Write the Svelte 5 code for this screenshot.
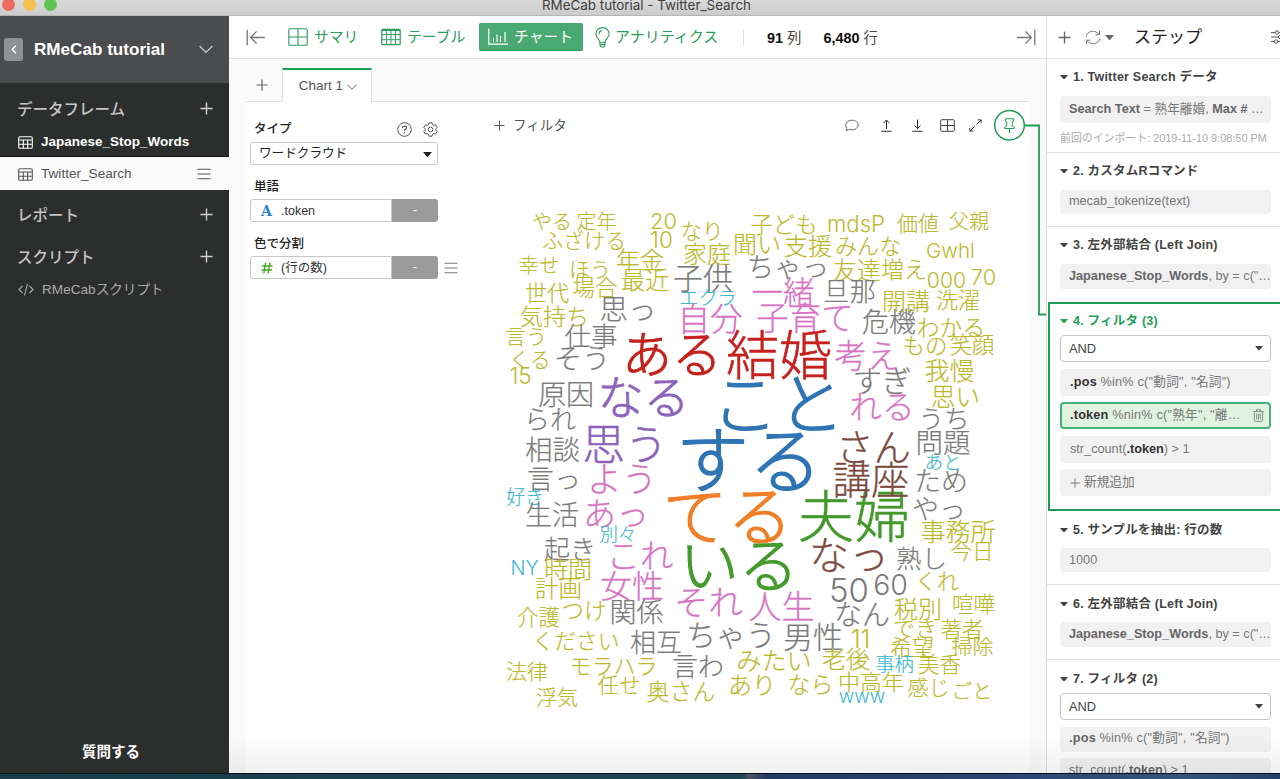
<script>
  const C = {
    o: '#bcb92c', g: '#7b7b7b', p: '#d873c3', c: '#39b7cb', r: '#c6211c',
    u: '#8c63bb', b: '#2f74b3', n: '#7d4b40', e: '#439a2b', a: '#f07f27'
  };
  // word, centre x, centre y, size, colour
  const words = [
    ['やる', 552, 221.5, 20, 'o'], ['定年', 596.5, 221.5, 20, 'o'], ['20', 663.5, 221, 21.8, 'o'], ['ふざける', 584, 240, 21, 'o'],
    ['10', 661.5, 240, 22.5, 'o'], ['なり', 702, 231, 21.5, 'o'], ['家庭', 707, 253.5, 24, 'o'], ['聞い', 757, 244, 24, 'o'],
    ['支援', 808, 245.5, 24, 'o'], ['子ども', 784, 225, 22.3, 'o'], ['mdsP', 856, 224, 22.2, 'o'], ['価値', 918, 223, 21, 'o'],
    ['父親', 969, 221, 20, 'o'], ['みんな', 868, 245.5, 22, 'o'], ['Gwhl', 950.5, 251, 20.5, 'o'], ['ちゃっ', 788, 267, 27.5, 'g'],
    ['友達', 857, 270, 23.5, 'o'], ['増え', 904, 269, 23, 'o'], ['000', 946.5, 280, 21.2, 'o'], ['70', 983.5, 277, 21.8, 'o'],
    ['一緒', 783, 292, 31.5, 'p'], ['旦那', 849.5, 291, 26.5, 'g'], ['開講', 906, 300.5, 24, 'o'], ['洗濯', 958, 300, 22, 'o'],
    ['子供', 703, 278, 30, 'g'], ['エクラ', 708, 298, 19.2, 'c'], ['自分', 710, 318.5, 32.5, 'p'], ['子育て', 805, 318, 32.5, 'p'],
    ['危機', 889, 322, 27, 'g'], ['わかる', 951, 327, 22.8, 'o'], ['もの', 925, 345.5, 22.5, 'o'], ['笑顔', 972, 345, 22.3, 'o'],
    ['我慢', 949.5, 370, 25, 'o'], ['思い', 955.5, 397, 24.5, 'o'], ['うち', 944, 418, 25.5, 'g'], ['年金', 640, 260, 24, 'o'],
    ['最近', 645, 279.5, 24, 'o'], ['幸せ', 539, 265, 20.5, 'o'], ['ほう', 590, 269, 21, 'o'], ['世代', 547, 293, 22, 'o'],
    ['場合', 595, 287.5, 22.5, 'o'], ['思っ', 628, 309, 28.5, 'g'], ['気持ち', 554.5, 316, 23, 'o'], ['言う', 526, 336, 21, 'o'],
    ['仕事', 591, 335.5, 26.5, 'g'], ['くる', 530, 359, 21, 'o'], ['そう', 582, 358, 28, 'g'], ['15', 520.5, 375.5, 22.5, 'o'],
    ['ある', 672, 354, 50, 'r'], ['結婚', 779, 355, 53, 'r'], ['考え', 867, 356, 32.5, 'p'], ['すぎ', 882, 381, 29.5, 'g'],
    ['れる', 882, 407, 32.7, 'p'], ['なる', 643.5, 396.5, 46, 'u'], ['こと', 778, 404, 66.5, 'b'], ['する', 749, 459, 73, 'b'],
    ['原因', 566, 394.5, 28, 'g'], ['られ', 550, 419, 26, 'g'], ['相談', 552.5, 450, 27.5, 'g'], ['思う', 625, 444, 42.5, 'u'],
    ['言っ', 554, 479, 27, 'g'], ['よう', 622, 479, 35, 'p'], ['好き', 525, 497, 18.8, 'c'], ['生活', 552, 515, 27, 'g'],
    ['あっ', 616, 513, 33, 'p'], ['別々', 618, 534, 18.5, 'c'], ['起き', 570, 549, 26, 'g'], ['これ', 640, 555, 33.5, 'p'],
    ['NY', 524.5, 567.5, 19.8, 'c'], ['時間', 568, 569, 24, 'o'], ['計画', 558.5, 588.5, 23.5, 'o'], ['女性', 632, 585.5, 32, 'p'],
    ['それ', 708.5, 602, 34.5, 'p'], ['介護', 538.5, 617, 21.5, 'o'], ['つけ', 584, 610, 22.5, 'o'], ['関係', 636.5, 612, 27, 'g'],
    ['ください', 576, 641, 21.8, 'o'], ['相互', 656, 642.5, 26, 'g'], ['ちゃう', 731, 635, 29.8, 'g'], ['男性', 813, 637, 30, 'g'],
    ['法律', 527, 671.5, 21, 'o'], ['モラハラ', 613.5, 666, 22, 'o'], ['言わ', 698, 666, 26, 'g'], ['任せ', 619, 685, 21.5, 'o'],
    ['奥さん', 681, 691.5, 23, 'o'], ['浮気', 557, 697, 21, 'o'], ['みたい', 774, 660, 25.2, 'o'], ['あり', 752, 685, 24, 'o'],
    ['なら', 810.5, 684.5, 23, 'o'], ['中高年', 871, 682, 22, 'o'], ['www', 862, 696.5, 19, 'c'], ['感じ', 928.5, 687, 21, 'o'],
    ['ごと', 972, 691.5, 20.5, 'o'], ['老後', 846, 659, 24, 'o'], ['事柄', 894.5, 663.5, 19.3, 'c'], ['美香', 939.5, 664, 21.5, 'o'],
    ['11', 860.5, 639, 25, 'o'], ['希望', 912, 647, 22, 'o'], ['掃除', 972.5, 646, 21, 'o'], ['でき', 915, 628, 22, 'o'],
    ['著者', 962, 629, 21.5, 'o'], ['税別', 918, 609, 24, 'o'], ['喧嘩', 973.5, 604, 21.5, 'o'], ['なん', 862, 614.5, 28, 'g'],
    ['50', 849, 590, 33, 'g'], ['60', 890.5, 584.5, 28.5, 'g'], ['くれ', 937, 581, 22, 'o'], ['熟し', 921.5, 558, 25.5, 'g'],
    ['今日', 972, 551, 21.5, 'o'], ['事務所', 958, 531.5, 25, 'o'], ['なっ', 849, 555, 40, 'n'], ['夫婦', 854, 516, 56, 'e'],
    ['てる', 727.5, 515, 65, 'a'], ['いる', 739, 564.5, 59.5, 'e'], ['人生', 781.5, 606.5, 33, 'p'], ['講座', 871, 479, 38.5, 'n'],
    ['さん', 873.5, 447, 37.5, 'n'], ['問題', 943, 443, 27.5, 'g'], ['あと', 943, 462, 18.5, 'c'], ['ため', 941, 481, 27, 'g'],
    ['やっ', 939, 509, 27, 'g']
  ];
  const latin = (w) => /^[\x00-\x7f]+$/.test(w);
  const stroke = (w, s) => (s > 40 ? (/[\u4e00-\u9fff]/.test(w) ? 0.5 : s * 0.018) : latin(w) ? 0 : s * 0.008);
</script>

{#snippet plus(s, w = 1.5)}
  <svg width={s} height={s} viewBox="0 0 14 14" fill="none" stroke="currentColor" stroke-width={w}><path d="M7 .5v13M.5 7h13" /></svg>
{/snippet}
{#snippet grid(w, h, sw)}
  <svg width={w} height={h} viewBox="0 0 20 17" fill="none" stroke="currentColor" stroke-width={sw}>
    <rect x=".8" y=".8" width="18.4" height="15.4" rx="1" /><path d="M1 6h18M1 11.2h18M5.6 2v14M10 2v14M14.5 2v14" stroke-width={sw * 0.8} /><path d="M1 1.6h18" stroke-width={sw * 1.5} />
  </svg>
{/snippet}
{#snippet table()}
  <svg width="15" height="13" viewBox="0 0 15 13" fill="none" stroke="currentColor" stroke-width="1.1"><rect x=".7" y=".7" width="13.6" height="11.6" rx="1.4" /><path d="M1 4h13M1 8.2h13M5.3 4v8M9.7 4v8" /></svg>
{/snippet}
{#snippet chevron(w)}
  <svg width={w} height={w * 0.6} viewBox="0 0 14 8" fill="none" stroke="currentColor" stroke-width="1.3"><path d="M.6.8 7 7.2 13.4.8" /></svg>
{/snippet}
{#snippet caret(w)}
  <svg width={w} height={w / 2 + 0.5} viewBox="0 0 8 4.5" fill="currentColor"><path d="M0 0h8L4.7 4q-.7.8-1.4 0z" /></svg>
{/snippet}
{#snippet burger()}
  <svg width="14" height="12" viewBox="0 0 14 12" stroke="currentColor" stroke-width="1.1"><path d="M.5 1.2h13M.5 6h13M.5 10.8h13" /></svg>
{/snippet}

<div class="app">
  <div class="titlebar">
    <div class="lights"><i class="red"></i><i class="yellow"></i><i class="green"></i></div>
    <span>RMeCab tutorial - Twitter_Search</span>
  </div>
  <div class="body">
    <aside class="side">
      <div class="project">
        <span class="back"><svg width="6" height="9" viewBox="0 0 6 9" fill="none" stroke="#fff" stroke-width="1.4"><path d="M5 .7 1.2 4.5 5 8.3" /></svg></span>
        <b>RMeCab tutorial</b>
        {@render chevron(14)}
      </div>
      <div class="grp g1"><span>データフレーム</span>{@render plus(13)}</div>
      <div class="item on">{@render table()}<b>Japanese_Stop_Words</b></div>
      <div class="item sel">{@render table()}<span>Twitter_Search</span><em>{@render burger()}</em></div>
      <div class="grp g2"><span>レポート</span>{@render plus(13)}</div>
      <div class="grp g3"><span>スクリプト</span>{@render plus(13)}</div>
      <div class="item script">
        <svg width="16" height="13" viewBox="0 0 16 13" fill="none" stroke="currentColor" stroke-width="1.1"><path d="M4.5 3 1 6.5 4.5 10M11.5 3 15 6.5 11.5 10M9.5.8l-3 11.6" /></svg>
        <span>RMeCabスクリプト</span>
      </div>
      <div class="ask">質問する</div>
    </aside>

    <main class="main">
      <nav class="tabs">
        <svg class="ic-l" width="20" height="17" viewBox="0 0 20 17" fill="none" stroke="#777" stroke-width="1.3"><path d="M1.2.8v15.4M4.5 8.5H19M10.6 2.4l-6 6.1 6 6.1" /></svg>
        <span class="tab t1"><svg width="20" height="18" viewBox="0 0 20 18" fill="none" stroke="currentColor" stroke-width="1.1"><rect x=".8" y=".8" width="18.4" height="16.4" rx="1" /><path d="M10 1v16M1 9h18" /></svg>サマリ</span>
        <span class="tab t2">{@render grid(20, 18, 1.2)}テーブル</span>
        <span class="tab t3"><svg width="20" height="17" viewBox="0 0 20 17" fill="none" stroke="currentColor" stroke-width="1.2"><path d="M.8.5v15.7H20M5.5 10v4M9 6.5V14M12.5 8v6M17 4v10" /></svg>チャート</span>
        <span class="tab t4"><svg width="15" height="21" viewBox="0 0 15 21" fill="none" stroke="currentColor" stroke-width="1.1"><path d="M4.7 15.2c0-3-3.8-4.3-3.8-8.2a6.6 6.4 0 0 1 13.2 0c0 3.9-3.8 5.2-3.8 8.2zM5 15.2v3.3l1.2 1.5h2.6l1.2-1.5v-3.3M5 17.6h5M4 7.2c0-2 1.3-3.3 3.3-3.4" /></svg>アナリティクス</span>
        <span class="rule"></span>
        <span class="count c1"><b>91</b> 列</span>
        <span class="count c2"><b>6,480</b> 行</span>
        <svg class="ic-r" width="20" height="17" viewBox="0 0 20 17" fill="none" stroke="#777" stroke-width="1.3"><path d="M18.8.8v15.4M1 8.5h14.5M9.4 2.4l6 6.1-6 6.1" /></svg>
      </nav>
      <div class="charts">
        <div class="add">{@render plus(12, 1.4)}</div>
        <div class="charttab">Chart 1 {@render chevron(10)}</div>
        <div class="rest"></div>
      </div>
      <section class="canvas">
        <div class="form">
          <div class="lab first"><b>タイプ</b>
            <svg width="15" height="15" viewBox="0 0 15 15" fill="none" stroke="#555" stroke-width="1"><circle cx="7.5" cy="7.5" r="6.8" /><path d="M5.5 6c0-2.7 4-2.5 4-.2 0 1.5-2 1.5-2 3.2M7.5 10.2v1.3" stroke-width="1.2" /></svg>
            <svg width="15" height="15" viewBox="0 0 15 15" fill="none" stroke="#555" stroke-width="1" stroke-linejoin="round"><path d="M6 .8h3l.5 1.9 1.3.7 1.9-.5 1.5 2.5-1.4 1.4v1.4l1.4 1.4-1.5 2.5-1.9-.5-1.3.7-.5 1.9H6l-.5-1.9-1.3-.7-1.9.5L.8 9.6l1.4-1.4V6.8L.8 5.4l1.5-2.5 1.9.5 1.3-.7z" /><circle cx="7.5" cy="7.5" r="2.3" /></svg>
          </div>
          <div class="select">ワードクラウド{@render caret(9)}</div>
          <div class="lab"><b>単語</b></div>
          <div class="field"><span class="in"><i class="A">A</i>.token</span><span class="btn">-</span></div>
          <div class="lab"><b>色で分割</b></div>
          <div class="field"><span class="in"><i class="hash"><svg width="12" height="12" viewBox="0 0 12 12" fill="none" stroke="currentColor" stroke-width="1.4"><path d="M4.7.5 2.8 11.5M9 .5 7.1 11.5M1 4h10.5M.5 8H11" /></svg></i>(行の数)</span><span class="btn">-</span><em>{@render burger()}</em></div>
        </div>
        <div class="tools">
          <span class="filter">{@render plus(11, 1.3)}<span>フィルタ</span></span>
          <svg class="i1" width="14" height="13" viewBox="0 0 14 13" fill="none" stroke="#666" stroke-width="1"><path d="M.8 11.2c1.3-.3 1.6-1 1.1-1.9C-.9 6 1.6 1.2 7.2 1.2c3.5 0 6 2 6 4.7 0 3.8-4.8 5.8-8.5 4.3-1 .9-2.5 1.2-3.9 1z" /></svg>
          <svg class="i2" width="11" height="13" viewBox="0 0 11 13" fill="none" stroke="#333" stroke-width="1"><path d="M5.5 10V1M2.5 4.2 5.5 1l3 3.2M.3 12.3h10.4" /></svg>
          <svg class="i3" width="11" height="13" viewBox="0 0 11 13" fill="none" stroke="#333" stroke-width="1"><path d="M5.5.5v9M2.5 6.5l3 3.2 3-3.2M.3 12.3h10.4" /></svg>
          <svg class="i4" width="15" height="13" viewBox="0 0 15 13" fill="none" stroke="#444" stroke-width="1"><rect x=".7" y=".7" width="13.6" height="11.6" rx="1" /><path d="M7.5 1v11M1 6.5h13" /></svg>
          <svg class="i5" width="13" height="13" viewBox="0 0 13 13" fill="none" stroke="#333" stroke-width="1"><path d="M5.6 7.4.9 12.1M7.4 5.6 12.1.9M8.8.9h3.3v3.3M.9 8.8v3.3h3.3" /></svg>
        </div>
      </section>
    </main>

    <aside class="steps">
      <header>
        {@render plus(13, 1.5)}
        <svg class="sync" width="16" height="15" viewBox="0 0 16 15" fill="none" stroke="#777" stroke-width="1"><path d="M1.2 6.5C2 1 10-1 14 4.5M14.5.8v4h-4M14.8 8.5C14 14 6 16 2 10.5M1.5 14.2v-4h4" /></svg>
        <span class="cr">{@render caret(9)}</span>
        <span class="ttl">ステップ</span>
        <svg class="opt" width="16" height="14" viewBox="0 0 16 14" fill="none" stroke="#555" stroke-width="1"><path d="M0 2.5h4M8 2.5h8M0 7h7M11 7h5M0 11.5h3M7 11.5h9" /><circle cx="6" cy="2.5" r="1.7" /><circle cx="9" cy="7" r="1.7" /><circle cx="5" cy="11.5" r="1.7" /></svg>
      </header>
      <div class="step s1"><h4>{@render caret(8)}1. Twitter Search データ</h4><div class="pill tall"><span><b>Search Text</b> = 熟年離婚, <b>Max #</b> …</span></div><p>前回のインポート: 2019-11-10 9:08:50 PM</p></div>
      <div class="step s2"><h4>{@render caret(8)}2. カスタムRコマンド</h4><div class="pill">mecab_tokenize(text)</div></div>
      <div class="step s3"><h4>{@render caret(8)}3. 左外部結合 (Left Join)</h4><div class="pill join"><span><b>Japanese_Stop_Words</b>, by = c("…</span></div></div>
      <div class="step s4">
        <h4>{@render caret(8)}4. フィルタ (3)</h4>
        <div class="and">AND{@render caret(8)}</div>
        <div class="pill tall wide"><span><b class="dk">.pos</b> %in% c("動詞", "名詞")</span></div>
        <div class="pill tall wide hot"><span><b class="dk">.token</b> %nin% c("熟年", "離…</span>
          <svg width="11" height="13" viewBox="0 0 11 13" fill="none" stroke="#7f8f80" stroke-width="1"><path d="M.3 2.5h10.4M3.5 2.3V.7h4v1.6M1.3 2.7v8.5q0 1.2 1.2 1.2h6q1.2 0 1.2-1.2V2.7M3.7 4.5v6M5.5 4.5v6M7.3 4.5v6" /></svg></div>
        <div class="pill tall"><span>str_count(<b class="dk">.token</b>) &gt; 1</span></div>
        <div class="pill tall new">{@render plus(10, 1.3)}新規追加</div>
      </div>
      <div class="step s5"><h4>{@render caret(8)}5. サンプルを抽出: 行の数</h4><div class="pill">1000</div></div>
      <div class="step s6"><h4>{@render caret(8)}6. 左外部結合 (Left Join)</h4><div class="pill join"><span><b>Japanese_Stop_Words</b>, by = c("…</span></div></div>
      <div class="step s7">
        <h4>{@render caret(8)}7. フィルタ (2)</h4>
        <div class="and">AND{@render caret(8)}</div>
        <div class="pill wide"><span><b>.pos</b> %in% c("動詞", "名詞")</span></div>
        <div class="pill last"><span>str_count(<b>.token</b>) &gt; 1</span></div>
      </div>
    </aside>
  </div>
  <div class="desk"></div>

  <svg class="over" width="1280" height="779" viewBox="0 0 1280 779">
    <g class="cloud" text-anchor="middle">
      {#each words as [w, x, y, s, c]}
        <text {x} y={y + s * (latin(w) ? 0.364 : 0.38)} font-size={s} fill={C[c]} stroke={C[c]} stroke-width={stroke(w, s)} class:lat={latin(w)}>{w}</text>
      {/each}
    </g>
    <g fill="none" stroke="#1f9c56">
      <path d="M1025 125.5h14V314.5h7" stroke-width="1.8" />
      <circle cx="1009.5" cy="125.3" r="14.8" stroke-width="1.5" />
      <path d="M1005.3 118.8h8.4v2.3l-1.5.6v4.2l2.1 1.2v1.4h-9.6v-1.4l2.1-1.2v-4.2l-1.5-.6zM1009.5 128.5v4.5" stroke-width="1" />
    </g>
  </svg>
  <div class="fade"></div>
</div>

<style>
  :global(body) { margin: 0; overflow: hidden; }
  .app { position: relative; width: 1280px; height: 779px; overflow: hidden; display: flex; flex-direction: column; font-family: "Liberation Sans", "Noto Sans CJK JP", sans-serif; font-size: 13px; line-height: 1.2; color: #444; background: #fff; }
  .app :global(svg) { flex: none; display: block; }
  i, em { font-style: normal; }
  .titlebar { height: 15px; flex: none; background: linear-gradient(#dadada, #cbcbcb); border-bottom: 1px solid #b5b5b5; display: flex; justify-content: center; overflow: hidden; font: 13.4px/17px Inter, sans-serif; color: #404040; position: relative; }
  .titlebar span { height: 17px; margin: -3px 0 0 13px; }
  .lights { position: absolute; left: 2px; top: -2px; display: flex; gap: 8px; }
  .lights i { width: 13px; height: 13px; border-radius: 50%; }
  .red { background: #ee6a5f; }
  .yellow { background: #f5bf4f; }
  .green { background: #61c554; }
  .body { display: flex; height: 757px; flex: none; overflow: hidden; }
  .desk { flex: 1; background: linear-gradient(90deg, #173d4b, #1d4553 58%, #4c5060 58.5%, #223a60 60%, #2a4775 80%, #31567a 92%, #22406b); border-top: 1px solid #08111d; }

  .side { width: 229px; flex: none; background: #2c2e2e; display: flex; flex-direction: column; box-sizing: border-box; }
  .project { height: 67px; background: #4b4c4e; display: flex; align-items: center; color: #fff; padding: 0 16px 0 4px; box-sizing: border-box; }
  .project b { font-size: 17.1px; margin-left: 11px; flex: 1; padding-top: 2px; }
  .project > :global(svg) { color: #ccc; }
  .back { width: 19px; height: 23px; border-radius: 3px; background: #909192; display: flex; align-items: center; justify-content: center; }
  .grp { display: flex; align-items: center; justify-content: space-between; padding: 0 16px 0 17px; color: #c4c4c4; font-size: 15.5px; font-weight: 500; height: 42px; }
  .grp span { padding-top: 3px; }
  .g1 { height: 51px; }
  .g2 { height: 49px; }
  .g3 { height: 35px; }
  .grp :global(svg) { color: #d0d0d0; }
  .item { display: flex; align-items: center; padding-left: 18px; gap: 8px; font-size: 14px; color: #fff; }
  .on { height: 23px; padding-bottom: 6px; box-sizing: border-box; border-bottom: 1px solid #111; }
  .on b { font-size: 13.5px; line-height: 16px; }
  .sel { height: 33px; background: #fafafa; color: #555; font-size: 13.6px; padding-top: 1px; box-sizing: border-box; }
  .sel span { padding-top: 1px; }
  .sel em { margin-left: auto; padding-right: 18px; }
  .script { height: 30px; color: #a9a9a9; font-size: 13.6px; }
  .script span { padding-top: 2px; }
  .ask { margin-top: auto; height: 44px; text-align: center; color: #fff; font-weight: 700; font-size: 14.5px; padding-right: 7px; line-height: 46px; }

  .main { width: 817px; flex: none; background: #fafafa; border-right: 1px solid #dedede; display: flex; flex-direction: column; }
  .tabs { height: 42px; background: #fff; border-bottom: 1px solid #e3e3e3; display: flex; align-items: center; color: #299c5c; font-size: 14.8px; }
  .ic-l { margin-left: 17px; }
  .tab { display: flex; align-items: center; gap: 6px; white-space: nowrap; line-height: 20px; }
  .t1 { margin-left: 22px; width: 70px; }
  .t2 { margin-left: 23px; width: 85px; }
  .t3 { margin-left: 13px; width: 104px; height: 28px; background: #4aa973; color: #fff; border-radius: 2px; box-sizing: border-box; padding-left: 9px; border-bottom: 1px solid #1fa05a; }
  .t4 { margin-left: 12px; width: 125px; gap: 5px; font-size: 15px; }
  .rule { width: 1px; height: 15px; background: #ddd; margin-left: 23px; }
  .count { color: #444; font-size: 14.4px; margin-left: 23px; padding-top: 3px; white-space: nowrap; }
  .c2 { margin-left: 22px; }
  .count b { color: #111; }
  .ic-r { margin-left: auto; margin-right: 10px; }
  .charts { display: flex; height: 43px; padding: 0 17px 0 16px; }
  .add { width: 37px; border-bottom: 1px solid #e3e3e3; display: flex; align-items: center; padding: 10px 0 0 11px; box-sizing: border-box; color: #666; }
  .charttab { margin-top: 9px; height: 34px; width: 90px; box-sizing: border-box; background: #fff; border: 1px solid #e0e0e0; border-top: 2px solid #1fa05a; border-bottom: 0; display: flex; align-items: center; justify-content: center; gap: 4px; font-size: 13.5px; color: #555; white-space: nowrap; padding: 1px 0 0 2px; }
  .rest { flex: 1; border-bottom: 1px solid #e3e3e3; }
  .canvas { flex: 1; margin: 0 17px 0 16px; background: #fff; display: flex; }
  .form { width: 229px; padding-left: 5px; box-sizing: border-box; color: #333; flex: none; }
  .lab { height: 34px; display: flex; align-items: center; padding: 10px 0 0 4px; box-sizing: border-box; color: #222; font-size: 12.5px; }
  .lab b { font-weight: 500; }
  .first { height: 40px; padding-top: 14px; margin-right: 36px; gap: 11px; }
  .first b { margin-right: auto; }
  .select { width: 188px; height: 23px; border: 1px solid #c8c8c8; border-radius: 3px; box-sizing: border-box; display: flex; align-items: center; justify-content: space-between; padding: 1px 5px 0 8px; font-size: 12.6px; color: #222; }
  .field { display: flex; height: 23px; align-items: center; }
  .in { width: 142px; height: 23px; box-sizing: border-box; border: 1px solid #c8c8c8; border-radius: 3px 0 0 3px; display: flex; align-items: center; padding: 1px 0 0 10px; font-size: 12.5px; }
  .in i { width: 20px; }
  .A { color: #2a7fc6; font: 700 14px/15px "DejaVu Serif", serif; }
  .hash { color: #48a52a; }
  .btn { width: 46px; height: 23px; background: #9b9b9b; color: #fff; border-radius: 0 3px 3px 0; text-align: center; line-height: 22px; }
  .field em { margin-left: 6px; color: #777; }
  .tools { flex: 1; display: flex; height: 46px; align-items: center; padding-left: 20px; }
  .filter { display: flex; align-items: center; gap: 8px; color: #555; font-size: 13.5px; width: 346px; padding-right: 5px; }
  .filter span { padding-top: 2px; }
  .i2 { margin-left: 22px; }
  .i3 { margin-left: 20px; }
  .i4 { margin-left: 17px; }
  .i5 { margin-left: 14px; }

  .steps { flex: 1; min-width: 0; background: #fff; overflow: hidden; }
  .steps header { height: 42px; border-bottom: 1px solid #e3e3e3; display: flex; align-items: center; padding-left: 11px; color: #666; }
  .sync { margin-left: 14px; }
  .cr { margin-left: 4px; }
  .ttl { font-size: 17px; color: #222; margin-left: 20px; width: 137px; flex: none; padding-top: 3px; }
  .step { box-sizing: border-box; border-bottom: 1px solid #e0e0e0; padding: 9px 0 0 13px; }
  h4 { margin: 0; height: 18px; display: flex; align-items: center; gap: 5px; font-size: 12.5px; font-weight: 700; color: #444; white-space: nowrap; letter-spacing: .22px; }
  .pill { width: 211px; height: 24px; margin-top: 10px; border-radius: 4px; background: #f1f1f1; color: #777; font-size: 12.7px; box-sizing: border-box; padding: 0 2px 0 9px; display: flex; align-items: center; white-space: nowrap; overflow: hidden; }
  .pill b { color: #666; }
  .pill b.dk { color: #333; }
  .pill.tall { height: 27px; }
  .pill.join { height: 25px; }
  .pill.wide { letter-spacing: .2px; }
  .s1 { height: 94px; }
  .s1 .pill span { padding-top: 1px; }
  .s1 p { margin: 7px 0 0; font-size: 10.9px; line-height: 17px; color: #aaa; white-space: nowrap; }
  .s2 { height: 74px; }
  .s3 { height: 75px; border-bottom: 0; }
  .s4 { height: 209px; border: 2px solid #1f9c56; border-right: 0; padding: 8px 0 0 10px; margin-left: 1px; }
  .s4 h4 { color: #23a05a; }
  .and { width: 211px; height: 27px; box-sizing: border-box; border: 1px solid #c4c4c4; border-radius: 4px; display: flex; align-items: center; justify-content: space-between; padding: 0 7px 0 8px; margin-top: 5px; background: #fff; color: #444; font-size: 12.8px; }
  .s4 .pill { margin-top: 6.7px; padding-left: 10px; }
  .s4 .pill.hot { background: #e1f3e0; border: 2px solid #42b277; padding: 0 5px 0 8px; justify-content: space-between; }
  .s4 .new { gap: 4px; margin-top: 6px; }
  .s5 { height: 74px; padding-top: 10px; }
  .s5 .pill { margin-top: 9px; padding-top: 1px; }
  .s6 { height: 75px; padding-top: 10px; }
  .s6 .pill { margin-top: 9px; }
  .s7 { border: 0; padding-top: 10px; }
  .s7 .pill { margin-top: 6.5px; height: 25px; }
  .s7 .last { margin-top: 6px; padding-top: 1px; }

  .over { position: absolute; left: 0; top: 0; pointer-events: none; }
  .cloud text { font-family: "Noto Sans CJK JP", sans-serif; font-weight: 300; }
  .cloud .lat { font-family: Inter, sans-serif; }
  .fade { position: absolute; left: 229px; right: 0; top: 735px; height: 38px; background: linear-gradient(rgba(0, 0, 0, 0), rgba(0, 0, 0, .06)); pointer-events: none; }
</style>
